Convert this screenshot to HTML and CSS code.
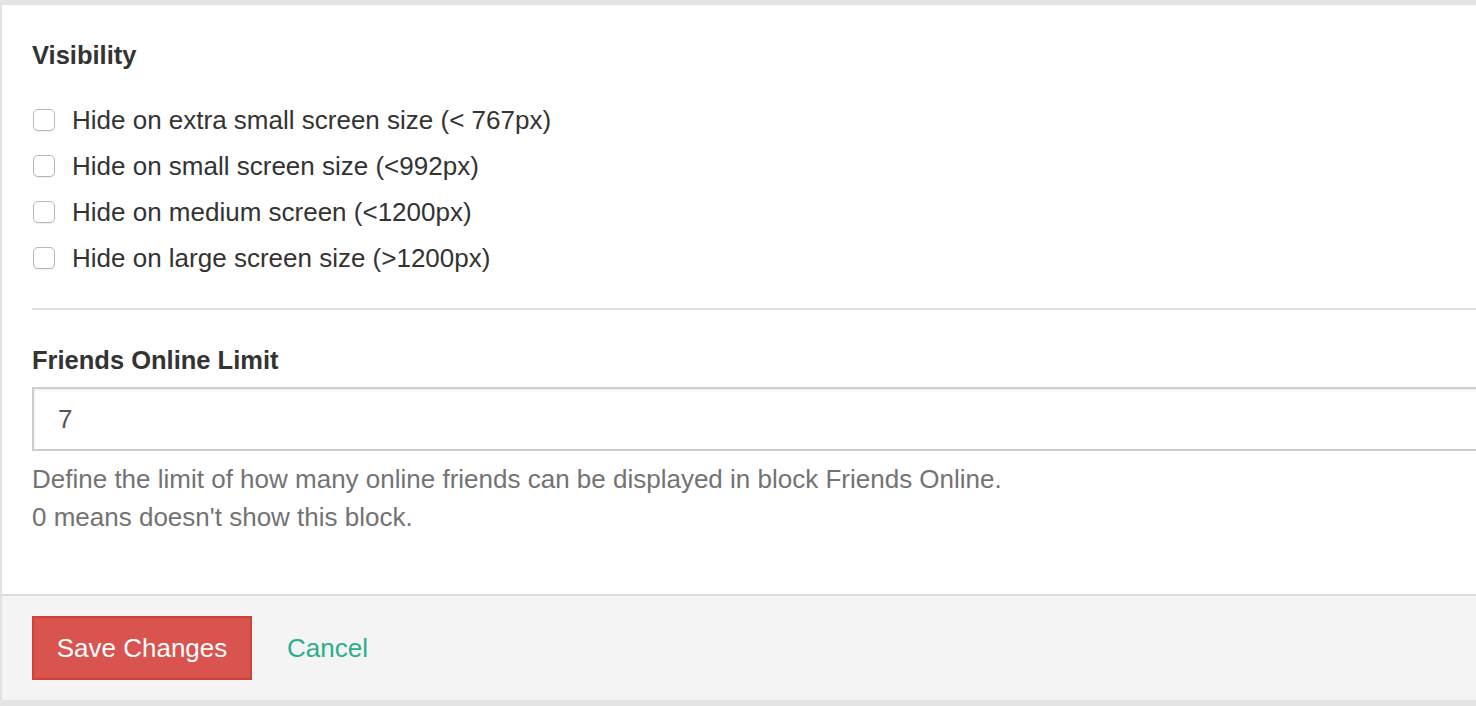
FILE: index.html
```html
<!DOCTYPE html>
<html>
<head>
<meta charset="utf-8">
<link rel="stylesheet" href="styles.css">
</head>
<body>
<div class="panel">
  <div class="panel-body">
    <h3 class="section-title">Visibility</h3>
    <div class="checks">
      <label class="check-row"><span class="box"></span><span>Hide on extra small screen size (&lt; 767px)</span></label>
      <label class="check-row"><span class="box"></span><span>Hide on small screen size (&lt;992px)</span></label>
      <label class="check-row"><span class="box"></span><span>Hide on medium screen (&lt;1200px)</span></label>
      <label class="check-row"><span class="box"></span><span>Hide on large screen size (&gt;1200px)</span></label>
    </div>
    <div class="divider"></div>
    <h3 class="section-title second">Friends Online Limit</h3>
    <div class="input">7</div>
    <p class="help">Define the limit of how many online friends can be displayed in block Friends Online.<br>0 means doesn't show this block.</p>
  </div>
  <div class="panel-footer">
    <button class="btn-save">Save Changes</button>
    <a class="cancel">Cancel</a>
  </div>
</div>
</body>
</html>
```
FILE: styles.css
```css
html, body {
  margin: 0;
  padding: 0;
}
body {
  background: #e4e4e4;
  overflow: hidden;
  font-family: "Liberation Sans", Arial, sans-serif;
  color: #333;
  height: 706px;
}
.panel {
  margin-top: 5px;
  width: 1520px;
  background: #fff;
  border-left: 2px solid #e2e2e2;
}
.panel-body {
  padding: 35px 0 58px 30px;
}
.section-title {
  margin: 0;
  font-size: 25.5px;
  line-height: 31px;
  font-weight: bold;
  color: #333;
}
.checks {
  margin-top: 26px;
  display: flex;
  flex-direction: column;
}
.check-row {
  height: 46px;
  display: flex;
  align-items: center;
  gap: 17px;
  font-size: 26px;
  color: #333;
}
.box {
  width: 20px;
  height: 20px;
  border: 1.5px solid #b8b8b8;
  border-radius: 5px;
  margin-left: 1px;
  background: #fff;
  box-shadow: 0 1px 1px rgba(0,0,0,0.07);
  flex: none;
}
.divider {
  margin-top: 27px;
  height: 2px;
  background: #e0e0e0;
}
.second {
  margin-top: 35px;
}
.input {
  margin-top: 11px;
  height: 60px;
  border: 2px solid #cccccc;
  box-shadow: inset 0 2px 3px rgba(0,0,0,0.06);
  box-sizing: content-box;
  padding-left: 24px;
  display: flex;
  align-items: center;
  font-size: 26px;
  color: #555;
}
.help {
  margin: 9px 0 0;
  font-size: 26px;
  line-height: 38px;
  color: #737373;
}
.panel-footer {
  border-top: 2px solid #dcdcdc;
  background: #f4f4f4;
  height: 104px;
  padding-left: 30px;
  display: flex;
  align-items: center;
  gap: 35px;
}
.btn-save {
  height: 64px;
  width: 220px;
  background: #d9534f;
  border: 2px solid #d1403b;
  color: #fff;
  font-family: "Liberation Sans", Arial, sans-serif;
  font-size: 26px;
  padding: 0;
}
.cancel {
  color: #2aae8c;
  font-size: 26px;
}
```
